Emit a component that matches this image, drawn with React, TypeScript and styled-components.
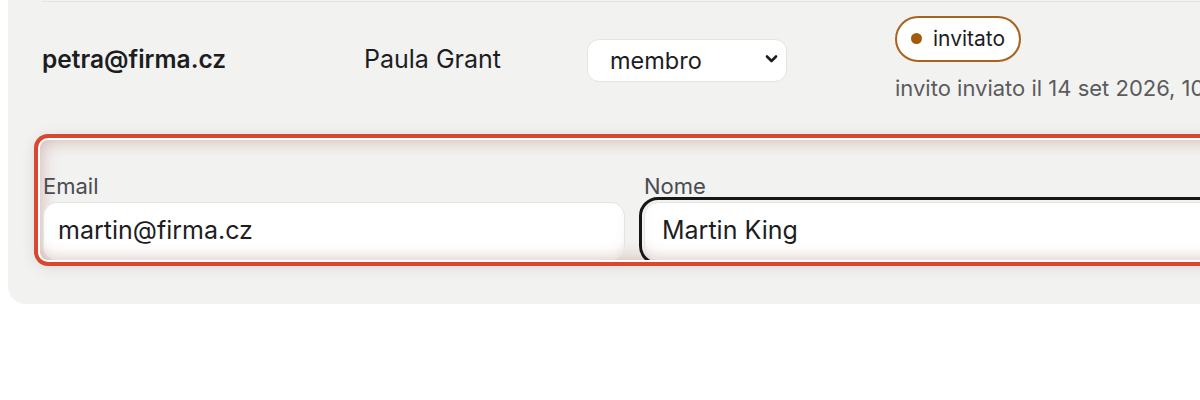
import React from "react";
import styled, { createGlobalStyle } from "styled-components";

const Global = createGlobalStyle`
  html, body {
    margin: 0;
    padding: 0;
    background: #ffffff;
    overflow: hidden;
    font-family: Inter, "Noto Sans", sans-serif;
    color: #1d1d1f;
  }
  #root { padding-left: 8px; }
  * { box-sizing: border-box; }
`;

const Panel = styled.section`
  width: 1400px;
  background: #f2f2f0;
  border-radius: 0 0 18px 18px;
  padding: 1px 0 44px 34px;
`;

const MemberRow = styled.div`
  display: grid;
  grid-template-columns: 322px 223px 308px 1fr;
  align-items: center;
  height: 117px;
  border-top: 1px solid #e3e3df;
`;

const Email = styled.div`
  font-size: 24.5px;
  font-weight: 560;
  padding-bottom: 3px;
`;

const Name = styled.div`
  font-size: 25px;
  font-weight: 400;
  padding-bottom: 3px;
`;

const SelectWrap = styled.div`
  position: relative;
  width: 200px;
  height: 43px;
`;

const RoleSelect = styled.select`
  appearance: none;
  width: 100%;
  height: 100%;
  border: 1px solid #e4e4e0;
  border-radius: 12px;
  background: #ffffff;
  font-family: Inter, "Noto Sans", sans-serif;
  font-size: 23.5px;
  color: #1d1d1f;
  padding: 0 0 0 22px;
`;

const Chevron = styled.svg`
  position: absolute;
  right: 9px;
  top: 15px;
  pointer-events: none;
`;

const StatusCell = styled.div`
  display: flex;
  flex-direction: column;
  align-items: flex-start;
  gap: 13px;
  padding-bottom: 4px;
`;

const Badge = styled.span`
  display: inline-flex;
  align-items: center;
  gap: 11px;
  height: 46px;
  padding: 0 14px;
  border: 2px solid #a8641c;
  border-radius: 23px;
  background: #ffffff;
  font-size: 21px;
  color: #1d1d1f;
`;

const Dot = styled.span`
  width: 11px;
  height: 11px;
  border-radius: 50%;
  background: #a35a0c;
`;

const SubText = styled.div`
  font-size: 22px;
  color: #5b5b5e;
  white-space: nowrap;
`;

const FormRow = styled.div`
  display: grid;
  grid-template-columns: 582px 1fr;
  column-gap: 19px;
  height: 120px;
  margin: 22px 0 0 -2px;
  padding: 33px 0 0 3px;
  overflow: hidden;
  border-radius: 8px;
  background: #f2f2f0;
  box-shadow:
    0 0 0 2px #ffffff,
    0 0 0 6px #d9472f,
    0 2px 16px 4px rgba(0, 0, 0, 0.12),
    inset 0 0 18px rgba(150, 70, 60, 0.38);
`;

const Field = styled.label`
  display: flex;
  flex-direction: column;
  gap: 3px;
`;

const FieldLabel = styled.span`
  font-size: 22px;
  line-height: 26px;
  color: #4b4b52;
`;

const TextInput = styled.input<{ $focused?: boolean }>`
  height: 58px;
  border: 1px solid #e6e4e1;
  border-radius: 14px;
  background: #ffffff;
  font-family: Inter, "Noto Sans", sans-serif;
  font-size: 25px;
  color: #1d1d1f;
  padding: 0 0 2px ${(p) => (p.$focused ? "17px" : "14px")};
  box-shadow: inset 0 -10px 14px -8px rgba(170, 120, 110, 0.35);
  outline: ${(p) => (p.$focused ? "3px solid #161616" : "none")};
  outline-offset: 2px;
`;

export default function App() {
  return (
    <>
      <Global />
      <Panel>
        <MemberRow>
          <Email>petra@firma.cz</Email>
          <Name>Paula Grant</Name>
          <SelectWrap>
            <RoleSelect defaultValue="membro">
              <option value="membro">membro</option>
              <option value="admin">amministratore</option>
            </RoleSelect>
            <Chevron width="13" height="10" viewBox="0 0 13 10">
              <path d="M2 2.5 L6.5 7 L11 2.5" fill="none" stroke="#1d1d1f" strokeWidth="2.6" strokeLinecap="round" strokeLinejoin="round" />
            </Chevron>
          </SelectWrap>
          <StatusCell>
            <Badge>
              <Dot />
              invitato
            </Badge>
            <SubText>invito inviato il 14 set 2026, 10:42</SubText>
          </StatusCell>
        </MemberRow>
        <FormRow>
          <Field>
            <FieldLabel>Email</FieldLabel>
            <TextInput defaultValue="martin@firma.cz" />
          </Field>
          <Field>
            <FieldLabel>Nome</FieldLabel>
            <TextInput $focused defaultValue="Martin King" />
          </Field>
        </FormRow>
      </Panel>
    </>
  );
}
